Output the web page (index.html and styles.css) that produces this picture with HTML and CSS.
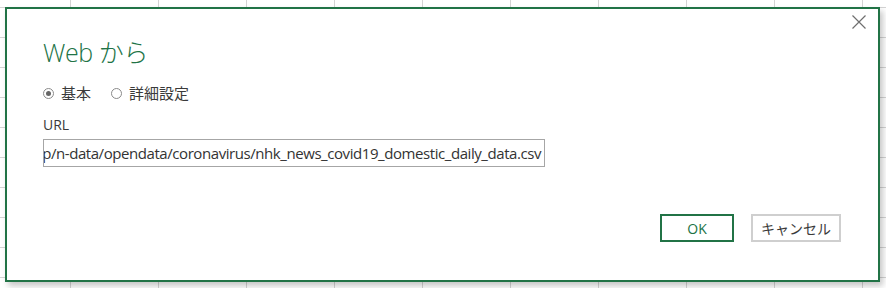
FILE: index.html
```html
<!DOCTYPE html>
<html lang="ja">
<head>
<meta charset="utf-8">
<title>Web から</title>
<link rel="stylesheet" href="styles.css">
</head>
<body>
<div class="sheet">
  <div class="dialog">
    <div class="topbar">
      <button class="close" aria-label="閉じる">
        <svg width="16" height="16" viewBox="0 0 16 16"><path d="M1.5 1.5 L14.5 14.5 M14.5 1.5 L1.5 14.5" stroke="#6f6f6f" stroke-width="1.2" fill="none"/></svg>
      </button>
    </div>
    <div class="body">
      <h1 class="title">Web から</h1>
      <div class="radios">
        <label class="radio"><span class="dot checked"></span>基本</label>
        <label class="radio"><span class="dot"></span>詳細設定</label>
      </div>
      <div class="label">URL</div>
      <div class="input"><span class="value">https://www3.nhk.or.jp/n-data/opendata/coronavirus/nhk_news_covid19_domestic_daily_data.csv</span></div>
    </div>
    <div class="actions">
      <button class="btn ok">OK</button>
      <button class="btn cancel">キャンセル</button>
    </div>
  </div>
</div>
</body>
</html>
```
FILE: styles.css
```css
html, body {
  margin: 0;
  padding: 0;
}
body {
  width: 886px;
  height: 288px;
  overflow: hidden;
  font-family: "Open Sans", "Noto Sans CJK JP", sans-serif;
}
.sheet {
  width: 886px;
  height: 288px;
  box-sizing: border-box;
  padding: 7px 0 0 5px;
  background-color: #fff;
  background-image:
    linear-gradient(to right, #d4d4d4 1px, transparent 1px),
    linear-gradient(to bottom, #d4d4d4 1px, transparent 1px);
  background-size: 88px 100%, 100% 30px;
  background-position: 70px 0, 0 7px;
}
.dialog {
  width: 875px;
  height: 275px;
  box-sizing: border-box;
  border: 2px solid #217346;
  background: #fff;
  box-shadow: 3px 4px 6px rgba(0, 0, 0, 0.22);
  display: flex;
  flex-direction: column;
}
.topbar {
  display: flex;
  justify-content: flex-end;
  padding: 5px 11px 0 0;
  height: 16px;
}
.close {
  width: 16px;
  height: 16px;
  padding: 0;
  border: 0;
  background: none;
  display: block;
}
.close svg { display: block; }
.body {
  padding-left: 36px;
}
.title {
  margin: 7px 0 0 0;
  font-family: "Open Sans", "Noto Sans CJK JP", sans-serif;
  font-weight: 300;
  font-size: 25px;
  line-height: 30px;
  color: #217346;
  letter-spacing: -0.4px;
}
.radios {
  margin-top: 17px;
  display: flex;
  gap: 20px;
  height: 18px;
  align-items: center;
}
.radio {
  display: flex;
  align-items: center;
  gap: 7px;
  font-family: "Noto Sans CJK JP", sans-serif;
  font-size: 15px;
  line-height: 18px;
  color: #3a3a3a;
}
.dot {
  width: 9px;
  height: 9px;
  border: 1px solid #8a8a8a;
  border-radius: 50%;
  box-sizing: content-box;
  position: relative;
  background: #fff;
}
.dot.checked::after {
  content: "";
  position: absolute;
  left: 2px;
  top: 2px;
  width: 5px;
  height: 5px;
  border-radius: 50%;
  background: #666;
}
.label {
  margin-top: 14px;
  font-size: 14px;
  line-height: 18px;
  color: #3a3a3a;
}
.input {
  margin-top: 5px;
  width: 502px;
  height: 28px;
  box-sizing: border-box;
  border: 1px solid #a6a6a6;
  display: flex;
  justify-content: flex-end;
  align-items: center;
  overflow: hidden;
  padding-right: 3px;
}
.value {
  white-space: nowrap;
  font-size: 15px;
  color: #333;
  letter-spacing: -0.43px;
}
.actions {
  margin-top: 47px;
  display: flex;
  justify-content: flex-end;
  gap: 17px;
  padding-right: 37px;
}
.btn {
  height: 28px;
  box-sizing: border-box;
  background: #fff;
  font-family: "Open Sans", "Noto Sans CJK JP", sans-serif;
  font-size: 14px;
  padding: 0;
  margin: 0;
}
.ok {
  width: 74px;
  border: 2px solid #217346;
  color: #217346;
}
.cancel {
  width: 90px;
  border: 2px solid #cfcfcf;
  color: #3a3a3a;
  font-family: "Noto Sans CJK JP", sans-serif;
}
```
